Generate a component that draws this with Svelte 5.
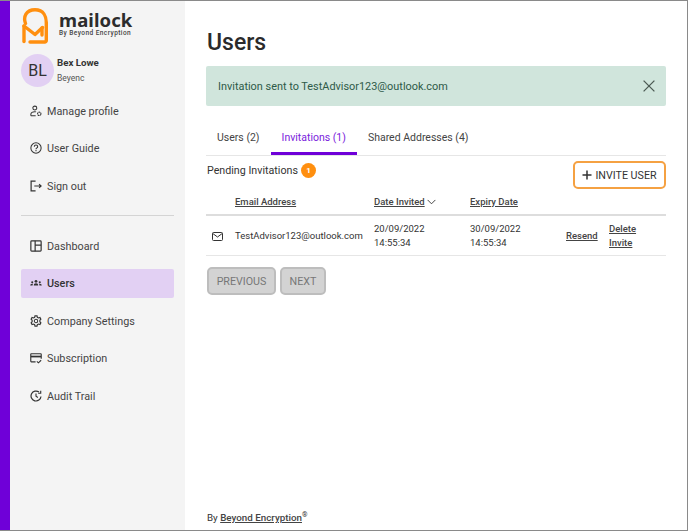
<script>
  const topNav = [
    { label: 'Manage profile', icon: 'profile' },
    { label: 'User Guide', icon: 'help' },
    { label: 'Sign out', icon: 'signout' }
  ];
  const mainNav = [
    { label: 'Dashboard', icon: 'dashboard' },
    { label: 'Users', icon: 'users', active: true },
    { label: 'Company Settings', icon: 'gear' },
    { label: 'Subscription', icon: 'card' },
    { label: 'Audit Trail', icon: 'history' }
  ];
</script>

{#snippet navIcon(name)}
  <svg class="nav-icon" viewBox="0 0 14 14" width="14" height="14" fill="none" stroke="#333" stroke-width="1.2">
    {#if name === 'profile'}
      <circle cx="5.6" cy="3.6" r="2.3" />
      <path d="M1 12.500v-1.700c0-1.800 2-3 4.600-3 .6 0 1 0 1.500.2M1 12.500h5.600" />
      <circle cx="10.800" cy="10.300" r="2" stroke-dasharray="2 .5" />
    {:else if name === 'help'}
      <circle cx="7" cy="7" r="6" />
      <path d="M5 5.400c0-2.600 4-2.600 4 0 0 1.500-2 1.600-2 3" />
      <path d="M7 9.400v1.400" />
    {:else if name === 'signout'}
      <path d="M6.500 1.200H1.300v11.600h5.200" stroke-width="1.400" />
      <path d="M5 7h8M10.600 4.800 13 7l-2.400 2.200" stroke-width="1.300" />
    {:else if name === 'dashboard'}
      <rect x="1" y="1" width="12" height="12" rx="1" stroke-width="1.400" />
      <path d="M6 1v12M6 6h7" stroke-width="1.400" />
    {:else if name === 'users'}
      <g fill="#333" stroke="none">
        <circle cx="7" cy="5" r="1.600" />
        <path d="M4.400 10c0-1.700 1-2.700 2.600-2.700s2.600 1 2.600 2.700z" />
        <circle cx="2.600" cy="6.200" r="1.200" />
        <path d="M.3 10c0-1.300.8-2.200 2.300-2.200.4 0 .7 0 1 .2-.4.5-.6 1.200-.6 2z" />
        <circle cx="11.400" cy="6.200" r="1.200" />
        <path d="M13.700 10c0-1.300-.8-2.200-2.300-2.200-.4 0-.7 0-1 .2.400.5.600 1.200.600 2z" />
      </g>
    {:else if name === 'gear'}
      <circle cx="7" cy="7" r="2" />
      <path d="M5.800 1h2.400l.4 1.700 1.300.7 1.700-.5 1.100 2-1.200 1.300v1.600l1.200 1.300-1.100 2-1.700-.5-1.300.7L8.200 13H5.800l-.4-1.700-1.300-.7-1.700.5-1.100-2 1.200-1.300V6.200L1.300 4.900l1.100-2 1.700.5 1.300-.7z" stroke-width="1.300" />
    {:else if name === 'card'}
      <path d="M6.500 11.500H1.500a.6.6 0 0 1-.6-.6V2.600A.6.6 0 0 1 1.500 2h11a.6.6 0 0 1 .6.6v5.400" stroke-width="1.300" />
      <path d="M1 5.300h12" stroke-width="2" />
      <path d="M8 11l1.800 1.600L13 9.600" stroke-width="1.300" />
    {:else if name === 'history'}
      <path d="M12.800 7.500A5.800 5.800 0 1 1 10.500 2.400" stroke-width="1.400" />
      <path d="M12.500 .8v3h-3" stroke-width="1.300" />
      <path d="M7 4v3.300l2.200 1.400" stroke-width="1.300" />
    {/if}
  </svg>
{/snippet}

<div class="frame">
  <aside class="sidebar">
    <div class="brand">
      <svg class="logo" viewBox="0 0 26 36" width="26" height="36" fill="none" stroke="#ff8f0f" stroke-width="3.400" stroke-linecap="round" stroke-linejoin="round">
        <path d="M3.500 15.500C1 9 4 1.800 13 1.800S24.300 9 24.300 14.500V32.500a1.500 1.500 0 0 1-1.500 1.500H8" />
        <path d="M2 18l11 8.500 7.500-7" />
        <path d="M2 18v15.500" />
        <path d="M20 20v7" />
      </svg>
      <div class="brand-text">
        <div class="brand-name">mailock</div>
        <div class="brand-sub">By Beyond Encryption</div>
      </div>
    </div>

    <div class="user">
      <div class="avatar">BL</div>
      <div class="user-text">
        <div class="user-name">Bex Lowe</div>
        <div class="user-org">Beyenc</div>
      </div>
    </div>

    <nav class="nav">
      {#each topNav as item}
        <div class="nav-item">
          {@render navIcon(item.icon)}
          <span>{item.label}</span>
        </div>
      {/each}
    </nav>

    <hr class="divider" />

    <nav class="nav">
      {#each mainNav as item}
        <div class="nav-item" class:active={item.active}>
          {@render navIcon(item.icon)}
          <span>{item.label}</span>
        </div>
      {/each}
    </nav>
  </aside>

  <main class="main">
    <h1>Users</h1>

    <div class="alert">
      <span>Invitation sent to TestAdvisor123@outlook.com</span>
      <svg viewBox="0 0 12 12" width="12" height="12" fill="none" stroke="#4b5a53" stroke-width="1.300">
        <path d="M.6.6l10.800 10.800M11.400.6.600 11.400" />
      </svg>
    </div>

    <div class="tabs">
      <div class="tab">Users (2)</div>
      <div class="tab selected">Invitations (1)</div>
      <div class="tab">Shared Addresses (4)</div>
    </div>

    <div class="toolbar">
      <div class="pending">
        <span>Pending Invitations</span>
        <span class="badge">1</span>
      </div>
      <button class="invite">
        <svg viewBox="0 0 10 10" width="10" height="10" fill="none" stroke="#333" stroke-width="1.500">
          <path d="M5 .5v9M.5 5h9" />
        </svg>
        INVITE USER
      </button>
    </div>

    <table>
      <thead>
        <tr>
          <th class="col-icon"></th>
          <th class="col-email"><u>Email Address</u></th>
          <th class="col-date">
            <u>Date Invited </u>
            <svg viewBox="0 0 10 6" width="9" height="6" fill="none" stroke="#333" stroke-width="1">
              <path d="M.7.7 5 5l4.300-4.300" />
            </svg>
          </th>
          <th class="col-expiry"><u>Expiry Date</u></th>
          <th class="col-resend"></th>
          <th></th>
        </tr>
      </thead>
      <tbody>
        <tr>
          <td class="col-icon">
            <svg viewBox="0 0 11 9" width="11" height="9" fill="none" stroke="#333" stroke-width="1">
              <rect x=".5" y=".5" width="10" height="8" rx="1" />
              <path d="M.8 1.500 5.500 5l4.700-3.500" />
            </svg>
          </td>
          <td>TestAdvisor123@outlook.com</td>
          <td>20/09/2022<br />14:55:34</td>
          <td>30/09/2022<br />14:55:34</td>
          <td><a href="#resend">Resend</a></td>
          <td><a href="#delete">Delete<br />Invite</a></td>
        </tr>
      </tbody>
    </table>

    <div class="pager">
      <button class="page-btn prev" disabled>PREVIOUS</button>
      <button class="page-btn next" disabled>NEXT</button>
    </div>

    <footer class="footer">By <a href="#be">Beyond Encryption</a><sup>®</sup></footer>
  </main>
</div>

<style>
  :global(body) {
    margin: 0;
    background: #fff;
  }

  .frame {
    display: flex;
    box-sizing: border-box;
    width: 688px;
    height: 531px;
    border-top: 1px solid #8a8a8a;
    border-bottom: 1px solid #8a8a8a;
    border-right: 1px solid #8a8a8a;
    font-family: Roboto, "Noto Sans", sans-serif;
    color: #333;
    overflow: hidden;
  }

  .sidebar {
    box-sizing: border-box;
    width: 185px;
    flex: none;
    background: #f4f4f4;
    border-left: 10px solid #6f00d8;
    padding: 6px 11px 0;
  }

  .brand {
    display: flex;
    align-items: center;
    gap: 11px;
    height: 37px;
  }

  .logo {
    flex: none;
    margin-left: 1px;
  }

  .brand-name {
    font-family: "Noto Sans", sans-serif;
    font-weight: 700;
    font-size: 18.500px;
    line-height: 18px;
    color: #2c2c2c;
    letter-spacing: .1px;
    margin-top: -2px;
  }

  .brand-sub {
    font-size: 6.500px;
    line-height: 9px;
    font-weight: 500;
    letter-spacing: .45px;
    color: #444;
    white-space: nowrap;
  }

  .user {
    display: flex;
    gap: 3px;
    margin-top: 10px;
    height: 33px;
  }

  .avatar {
    width: 33px;
    height: 33px;
    flex: none;
    border-radius: 50%;
    background: #e2d0f3;
    display: flex;
    align-items: center;
    justify-content: center;
    font-size: 16px;
    color: #333;
  }

  .user-name {
    font-size: 9.700px;
    font-weight: 700;
    line-height: 14px;
    margin-top: 2px;
  }

  .user-org {
    font-size: 8.500px;
    line-height: 13px;
    margin-top: 2px;
    color: #555;
  }

  .nav {
    display: flex;
    flex-direction: column;
    gap: 8.500px;
  }

  .user + .nav {
    margin-top: 9px;
  }

  .nav-item {
    display: flex;
    align-items: center;
    gap: 5px;
    height: 29px;
    padding-left: 9px;
    border-radius: 2px;
    font-size: 10.800px;
    color: #444;
  }

  .nav-item.active {
    background: #e2d0f3;
    font-weight: 500;
    color: #333;
  }

  .nav-item span {
    padding-top: 1px;
  }

  .nav-icon {
    flex: none;
    width: 12px;
    height: 12px;
  }

  .divider {
    border: 0;
    border-top: 1px solid #d4d4d4;
    margin: 15px 0;
  }

  .main {
    flex: 1;
    min-width: 0;
    display: flex;
    flex-direction: column;
    padding: 0 21px;
  }

  h1 {
    margin: 27px 0 0 1px;
    font-size: 23px;
    line-height: 29px;
    font-weight: 500;
    color: #2b2b2b;
  }

  .alert {
    display: flex;
    align-items: center;
    justify-content: space-between;
    height: 40px;
    margin-top: 9px;
    padding: 0 11px 0 12px;
    border-radius: 2px;
    background: #d0e5dc;
    color: #2e5a48;
    font-size: 10.900px;
  }

  .tabs {
    display: flex;
    margin-top: 19px;
    border-bottom: 1px solid #e6e6e6;
    height: 30px;
    font-size: 10.500px;
  }

  .tab {
    padding: 5px 11px 0;
    line-height: 16px;
    color: #444;
  }

  .tab.selected {
    color: #7a22dc;
    box-shadow: inset 0 -3px 0 #6f00d8;
    height: 30px;
    box-sizing: border-box;
  }

  .toolbar {
    display: flex;
    justify-content: space-between;
    padding-top: 5px;
    height: 28px;
  }

  .pending {
    display: flex;
    align-items: center;
    gap: 3px;
    height: 18px;
    margin-left: 1px;
    font-size: 10.700px;
  }

  .badge {
    width: 15px;
    height: 15px;
    border-radius: 50%;
    background: #ff8f0f;
    color: #fff;
    font-size: 8px;
    font-weight: 700;
    display: flex;
    align-items: center;
    justify-content: center;
  }

  .invite {
    box-sizing: border-box;
    width: 93px;
    height: 28px;
    display: flex;
    align-items: center;
    justify-content: center;
    gap: 3px;
    padding: 0;
    background: #fff;
    border: 2px solid #f5a142;
    border-radius: 5px;
    font: inherit;
    font-size: 10.700px;
    color: #333;
  }

  table {
    border-collapse: collapse;
    width: 460px;
    font-size: 9.500px;
    table-layout: fixed;
  }

  th {
    text-align: left;
    font-weight: 500;
    height: 25px;
    padding: 0;
    color: #444;
    border-bottom: 2px solid #ddd;
    white-space: nowrap;
  }

  td {
    padding: 1px 0 0;
    height: 38px;
    line-height: 14.500px;
    border-bottom: 1px solid #e6e6e6;
    color: #333;
    white-space: nowrap;
  }

  .col-icon { width: 29px; }
  td.col-icon svg { display: block; margin-left: 6px; }
  .col-email { width: 139px; }
  .col-date { width: 96px; }
  .col-expiry { width: 96px; }
  .col-resend { width: 43px; }

  a {
    color: #444;
    font-weight: 500;
    text-decoration: underline;
  }

  .pager {
    display: flex;
    gap: 4px;
    margin-top: 11px;
    margin-left: 1px;
  }

  .page-btn {
    box-sizing: border-box;
    height: 28px;
    padding: 0;
    background: #d3d3d3;
    border: 2px solid #bdbdbd;
    border-radius: 5px;
    font: inherit;
    font-size: 10.700px;
    color: #777;
  }

  .prev { width: 69px; }
  .next { width: 46px; }

  .footer {
    margin-top: auto;
    margin-bottom: 5px;
    margin-left: 1px;
    font-size: 9.800px;
    line-height: 14px;
  }

  sup {
    font-size: 7px;
    line-height: 0;
  }
</style>
